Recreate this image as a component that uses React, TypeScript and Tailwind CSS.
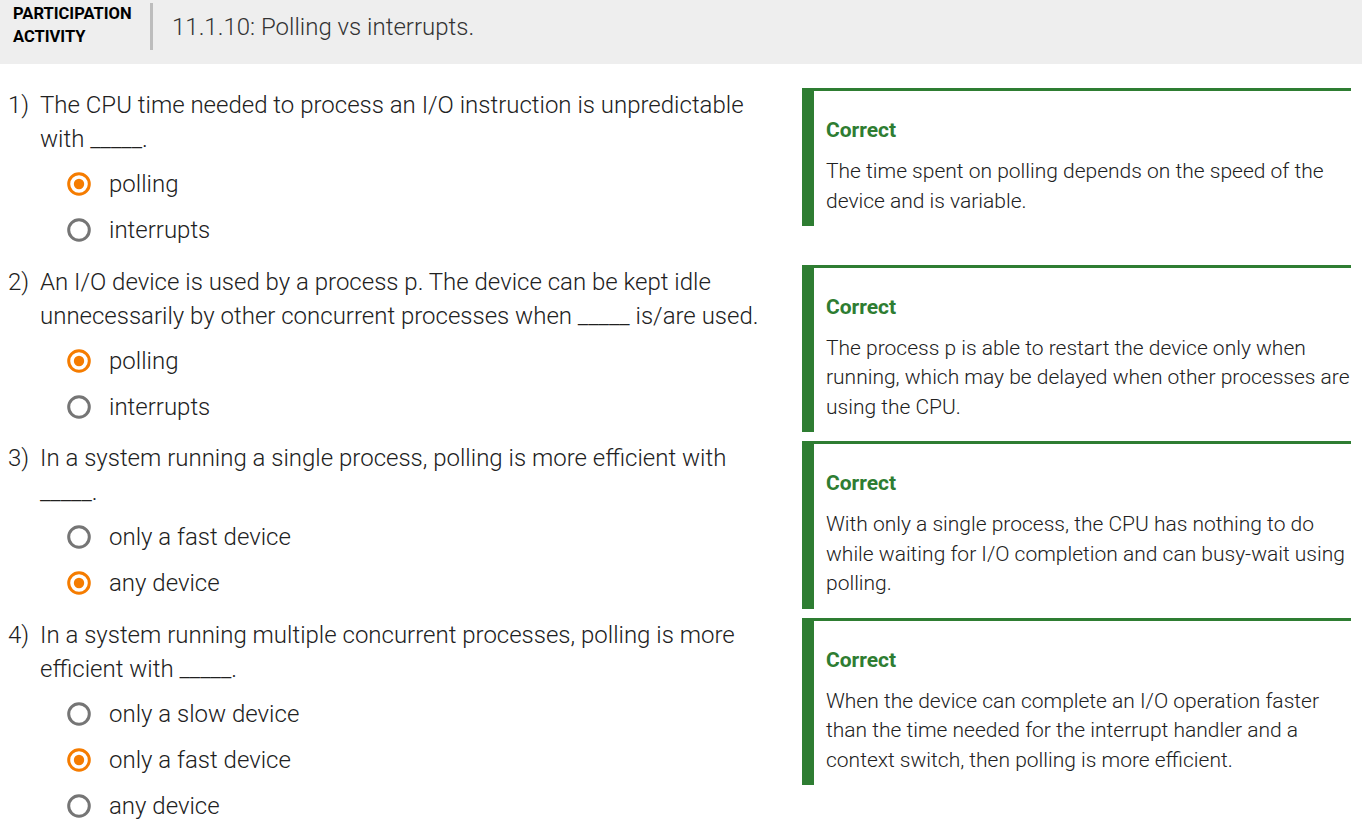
import React from "react";

type Option = { label: string; selected?: boolean };
type Question = {
  num: string;
  text: React.ReactNode;
  options: Option[];
  feedback: string;
};

const questions: Question[] = [
  {
    num: "1)",
    text: <>The CPU time needed to process an I/O instruction is unpredictable with _____.</>,
    options: [{ label: "polling", selected: true }, { label: "interrupts" }],
    feedback: "The time spent on polling depends on the speed of the device and is variable.",
  },
  {
    num: "2)",
    text: (
      <>
        An I/O device is used by a process p. The device can be kept idle unnecessarily by other
        concurrent processes when _____ is/are used.
      </>
    ),
    options: [{ label: "polling", selected: true }, { label: "interrupts" }],
    feedback:
      "The process p is able to restart the device only when running, which may be delayed when other processes are using the CPU.",
  },
  {
    num: "3)",
    text: (
      <>
        In a system running a single process, polling is more efficient with
        <br />
        _____.
      </>
    ),
    options: [{ label: "only a fast device" }, { label: "any device", selected: true }],
    feedback:
      "With only a single process, the CPU has nothing to do while waiting for I/O completion and can busy-wait using polling.",
  },
  {
    num: "4)",
    text: <>In a system running multiple concurrent processes, polling is more efficient with _____.</>,
    options: [
      { label: "only a slow device" },
      { label: "only a fast device", selected: true },
      { label: "any device" },
    ],
    feedback:
      "When the device can complete an I/O operation faster than the time needed for the interrupt handler and a context switch, then polling is more efficient.",
  },
];

function Radio({ selected }: { selected?: boolean }) {
  const color = selected ? "#f57c00" : "#757575";
  return (
    <svg width="24" height="24" viewBox="0 0 24 24" className="shrink-0">
      <circle cx="12" cy="12" r="10.3" fill="none" stroke={color} strokeWidth="3" />
      {selected && <circle cx="12" cy="12" r="5.2" fill={color} />}
    </svg>
  );
}

function Row({ q }: { q: Question }) {
  return (
    <div className="flex items-start">
      <div className="w-[802px] shrink-0 flex pb-[11.5px]">
        <div className="w-[40px] shrink-0 pl-[8px] text-[24px] leading-[34px]">{q.num}</div>
        <div className="flex-1 pr-[20px]">
          <div className="text-[24px] leading-[34px] max-w-[730px]">{q.text}</div>
          <div className="mt-[5px] flex flex-col">
            {q.options.map((o) => (
              <div key={o.label} className="flex items-center h-[46px] pl-[27px]">
                <Radio selected={o.selected} />
                <span className="ml-[18px] text-[24px]">{o.label}</span>
              </div>
            ))}
          </div>
        </div>
      </div>
      <div className="w-[549px] shrink-0 border-l-[12px] border-t-[3px] border-[#2e7d32] pl-[12px] pt-[27px] pb-[10px]">
        <div className="text-[#2e7d32] font-bold text-[21px] leading-[24px]">Correct</div>
        <div className="mt-[15px] text-[21px] leading-[29.5px]">{q.feedback}</div>
      </div>
    </div>
  );
}

export default function App() {
  return (
    <div
      className="min-h-screen bg-white text-[#212121] font-light"
      style={{ fontFamily: "Roboto, 'Noto Sans', sans-serif" }}
    >
      <div className="h-[64px] bg-[#eeeeee] flex items-start">
        <div className="pl-[13px] pt-[2px] w-[150px] text-[16.5px] leading-[23px] font-bold text-black">
          PARTICIPATION
          <br />
          ACTIVITY
        </div>
        <div className="mt-[3px] h-[47px] w-[3px] bg-[#bdbdbd]" />
        <div className="ml-[19px] pt-[12px] text-[24px] leading-[30px] text-[#333]">
          11.1.10: Polling vs interrupts.
        </div>
      </div>
      <div className="pt-[24px]">
        {questions.map((q) => (
          <Row key={q.num} q={q} />
        ))}
      </div>
    </div>
  );
}
